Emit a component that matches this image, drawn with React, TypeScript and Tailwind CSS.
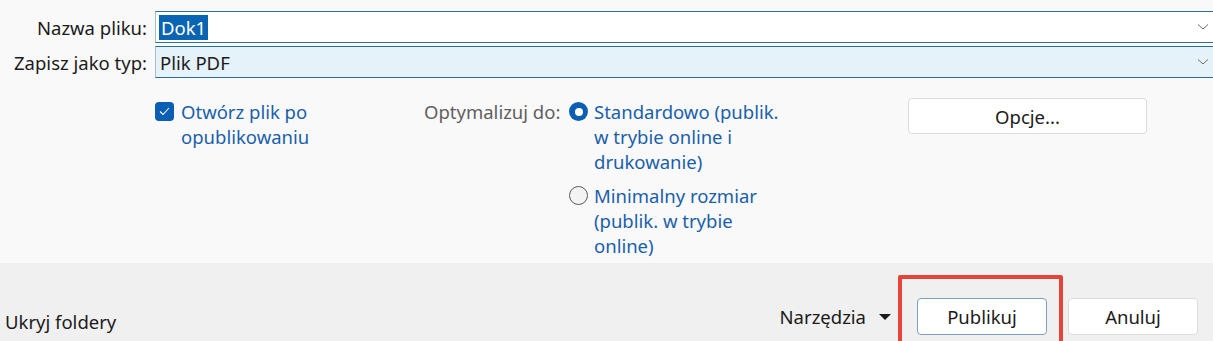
import React from 'react';

function Chevron() {
  return (
    <svg width="12" height="8" viewBox="0 0 12 8" className="shrink-0">
      <path d="M1 1.5 L6 6 L11 1.5" fill="none" stroke="#6b6b6b" strokeWidth="1" />
    </svg>
  );
}

function Field({ label, children, tinted }: { label: string; children: React.ReactNode; tinted?: boolean }) {
  return (
    <div className="flex items-center h-[32px]">
      <div className="w-[148px] text-right text-[#1b1b1b] pr-[1px]">{label}</div>
      <div
        className={`ml-[7px] flex-1 h-full flex items-center pl-[3px] pr-[4px] border-y-[1.5px] border-l border-y-[#2a6f98] border-l-[#a9bccb] ${
          tinted ? 'bg-[#e6f2f9]' : 'bg-white'
        }`}
      >
        <div className="flex-1">{children}</div>
        <Chevron />
      </div>
    </div>
  );
}

export default function App() {
  return (
    <div
      className="w-[1213px] h-[341px] overflow-hidden flex flex-col bg-[#f9f9f9] text-[18.5px] leading-[25px]"
      style={{ fontFamily: '"Noto Sans", "Open Sans", sans-serif' }}
    >
      <div className="h-[263px] flex flex-col pt-[11px]">
        <div className="flex flex-col gap-[3px]">
          <Field label="Nazwa pliku:">
            <span className="bg-[#0a64b4] text-white px-[2px]">Dok1</span>
          </Field>
          <Field label="Zapisz jako typ:" tinted>
            <span className="text-[#1b1b1b] pl-[1px]">Plik PDF</span>
          </Field>
        </div>

        <div className="flex mt-[21px]">
          <div className="flex items-start ml-[155px] w-[269px]">
            <span className="mt-[3px] w-[19px] h-[19px] rounded-[4px] bg-[#0a5fb4] flex items-center justify-center shrink-0">
              <svg width="11" height="9" viewBox="0 0 11 9">
                <path d="M1 4.5 L4 7.5 L10 1" fill="none" stroke="white" strokeWidth="1.1" />
              </svg>
            </span>
            <span className="ml-[7px] text-[#1a5fac]">
              Otwórz plik po
              <br />
              opublikowaniu
            </span>
          </div>

          <div className="flex items-start">
            <span className="text-[#5f5f5f] w-[145px]">Optymalizuj do:</span>
            <div className="flex flex-col">
              <div className="flex items-start">
                <span className="mt-[3px] w-[19px] h-[19px] rounded-full bg-[#0a5fb4] flex items-center justify-center shrink-0">
                  <span className="w-[8px] h-[8px] rounded-full bg-white" />
                </span>
                <span className="ml-[6px] text-[#1a5fac]">
                  Standardowo (publik.
                  <br />
                  w trybie online i
                  <br />
                  drukowanie)
                </span>
              </div>
              <div className="flex items-start mt-[9px]">
                <span className="mt-[3px] w-[19px] h-[19px] rounded-full border border-[#5a5a5a] bg-[#f3f3f3] shrink-0" />
                <span className="ml-[6px] text-[#1a5fac]">
                  Minimalny rozmiar
                  <br />
                  (publik. w trybie
                  <br />
                  online)
                </span>
              </div>
            </div>
          </div>

          <div className="ml-auto mr-[66px] -mt-[1px]">
            <button className="w-[239px] h-[36px] bg-white border border-[#dcdcdc] rounded-[4px] text-[#1b1b1b]">
              Opcje...
            </button>
          </div>
        </div>
      </div>

      <div className="flex-1 bg-[#f0f0f0] flex items-end pb-[6px] relative">
        <span className="ml-[5px] mb-[1px] text-[#1b1b1b]">Ukryj foldery</span>
        <div className="ml-auto flex items-center mr-[15px]">
          <span className="text-[#1b1b1b]">Narzędzia</span>
          <span className="ml-[13px] w-0 h-0 border-l-[6px] border-r-[6px] border-t-[6px] border-l-transparent border-r-transparent border-t-[#1b1b1b]" />
          <button className="ml-[26px] w-[130px] h-[37px] bg-white border border-[#7d9fbd] rounded-[4px] text-[#1b1b1b]">
            Publikuj
          </button>
          <button className="ml-[21px] w-[130px] h-[37px] bg-white border border-[#dcdcdc] rounded-[4px] text-[#1b1b1b]">
            Anuluj
          </button>
        </div>
        <div className="absolute left-[898px] top-[12px] w-[165px] h-[80px] border-[4px] border-[#e5443b] rounded-[2px]" />
      </div>
    </div>
  );
}
